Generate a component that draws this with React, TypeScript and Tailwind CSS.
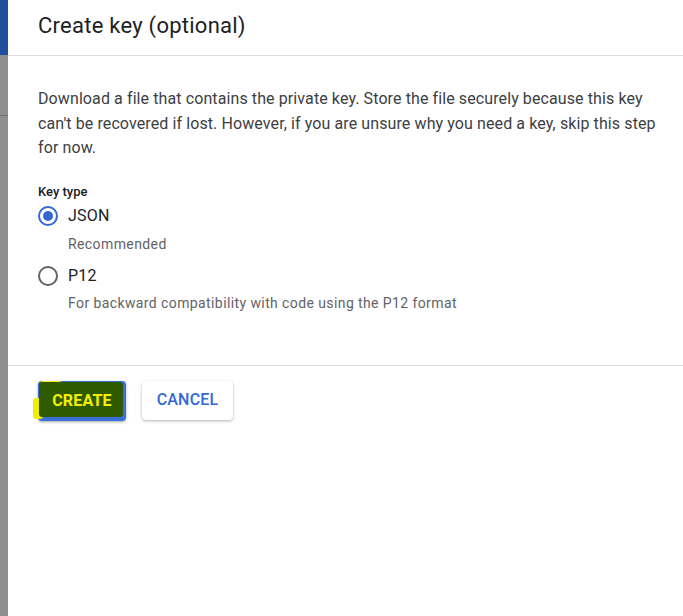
export default function App() {
  return (
    <div className="flex h-[616px] w-[683px] overflow-hidden bg-white" style={{ fontFamily: "Roboto, 'Liberation Sans', sans-serif" }}>
      <div className="flex w-[8px] shrink-0 flex-col">
        <div className="h-[55px] bg-[#1f4f9c]" />
        <div className="h-[60px] bg-[#8f8f8f]" />
        <div className="h-px bg-[#6e6e6e]" />
        <div className="flex-1 bg-[#8f8f8f]" />
      </div>
      <div className="flex flex-1 flex-col">
        <div className="flex h-[56px] items-center border-b border-[#dadce0] pb-[4px] pl-[30px]">
          <h1 className="text-[22px] leading-[28px] tracking-[0.25px] text-[#202124]">Create key (optional)</h1>
        </div>
        <div className="pl-[30px] pr-[18px] pt-[31px]">
          <p className="text-[16px] leading-[24.5px] tracking-[0.1px] text-[#3c4043]">
            Download a file that contains the private key. Store the file securely because this key can't be recovered if lost. However, if you are unsure why you need a key, skip this step for now.
          </p>
          <div className="mt-[22px] text-[13px] font-medium leading-[18px] text-[#202124]">Key type</div>
          <div className="mt-[4px] flex items-center gap-[10px]">
            <span className="flex h-[20px] w-[20px] items-center justify-center rounded-full border-2 border-[#3367d6]">
              <span className="h-[10px] w-[10px] rounded-full bg-[#3367d6]" />
            </span>
            <span className="text-[16px] leading-[22px] tracking-[0.2px] text-[#202124]">JSON</span>
          </div>
          <div className="mt-[7px] pl-[30px] text-[14px] leading-[20px] tracking-[0.4px] text-[#5f6368]">Recommended</div>
          <div className="mt-[11px] flex items-center gap-[10px]">
            <span className="h-[20px] w-[20px] rounded-full border-2 border-[#5f6368]" />
            <span className="text-[16px] leading-[22px] tracking-[0.2px] text-[#202124]">P12</span>
          </div>
          <div className="mt-[6px] pl-[30px] text-[14px] leading-[20px] tracking-[0.4px] text-[#5f6368]">For backward compatibility with code using the P12 format</div>
        </div>
        <div className="mt-[52px] border-t border-[#dadce0]" />
        <div className="flex gap-[16px] pl-[30px] pt-[15px]">
          <div className="relative flex h-[40px] w-[88px] items-center justify-center rounded-[4px] bg-[#3a6fd8] shadow-[0_1px_3px_rgba(0,0,0,0.35)]">
            <div className="absolute left-[-5px] top-[17px] h-[21px] w-[10px] rounded-[3px] bg-[#f2ee00]" />
            <div className="absolute left-[2px] top-[0px] h-[6px] w-[22px] rounded-full bg-[#f2ee00]" />
            <div className="absolute left-[1px] right-[3px] top-[1px] bottom-[4px] rounded-[3px] bg-[#2f5a00]" />
            <span className="relative text-[16px] font-bold tracking-[0.2px] text-[#f4f000]">CREATE</span>
          </div>
          <button className="flex h-[39px] w-[91px] items-center justify-center rounded-[4px] bg-white text-[16px] font-medium tracking-[0.2px] text-[#3367d6] shadow-[0_1px_3px_rgba(0,0,0,0.3)]">
            CANCEL
          </button>
        </div>
      </div>
    </div>
  );
}
